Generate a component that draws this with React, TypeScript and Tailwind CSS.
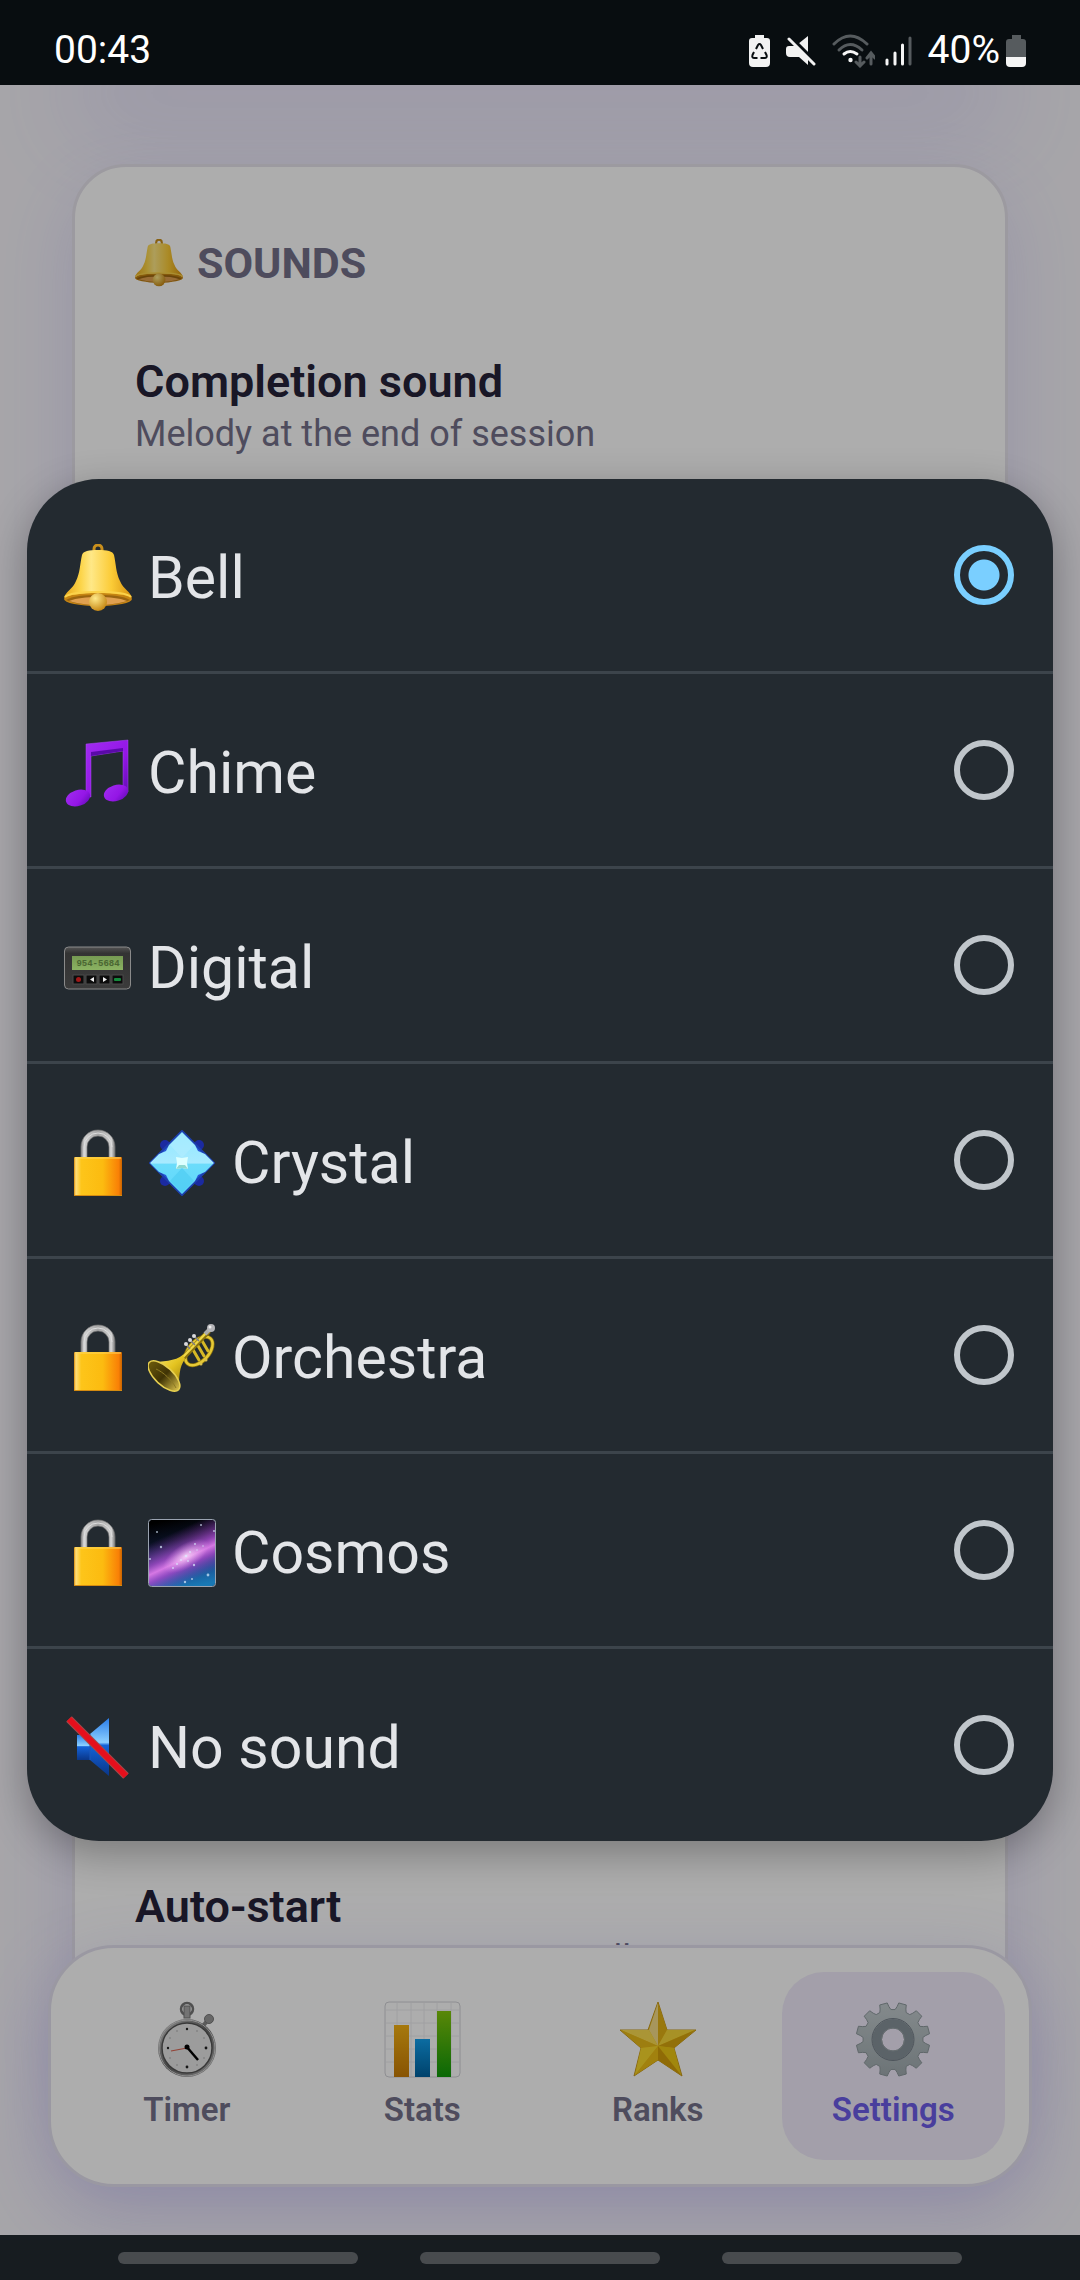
import { useState } from "react";
import type { ReactNode } from "react";

const Gradients: React.FC = () => (
  <svg width="0" height="0" className="absolute" aria-hidden="true">
    <defs>
      <linearGradient id="gold" x1="0" x2="1" y1="0" y2="0">
        <stop offset="0" stopColor="#e9a91c" />
        <stop offset="0.25" stopColor="#fcd54a" />
        <stop offset="0.4" stopColor="#ffe887" />
        <stop offset="0.7" stopColor="#fbcb36" />
        <stop offset="1" stopColor="#d8920f" />
      </linearGradient>
      <radialGradient id="clapper" cx="0.35" cy="0.3" r="0.8">
        <stop offset="0" stopColor="#ffe98a" />
        <stop offset="1" stopColor="#c07e08" />
      </radialGradient>
      <linearGradient id="purple" x1="0" x2="1" y1="0" y2="1">
        <stop offset="0" stopColor="#a02cf0" />
        <stop offset="0.6" stopColor="#9416e6" />
        <stop offset="1" stopColor="#5c0bb0" />
      </linearGradient>
      <linearGradient id="pager" x1="0" x2="0" y1="0" y2="1">
        <stop offset="0" stopColor="#555" />
        <stop offset="0.15" stopColor="#333" />
        <stop offset="1" stopColor="#3b3b3b" />
      </linearGradient>
      <linearGradient id="screen" x1="0" x2="0" y1="0" y2="1">
        <stop offset="0" stopColor="#769a52" />
        <stop offset="1" stopColor="#8bb262" />
      </linearGradient>
      <linearGradient id="lock" x1="0" x2="1" y1="0" y2="0">
        <stop offset="0" stopColor="#d98a0a" />
        <stop offset="0.04" stopColor="#ffdf7a" />
        <stop offset="0.15" stopColor="#fdc51a" />
        <stop offset="0.6" stopColor="#fcbb10" />
        <stop offset="0.93" stopColor="#f98006" />
        <stop offset="1" stopColor="#c96400" />
      </linearGradient>
      <linearGradient id="shackle" x1="0" x2="1" y1="0" y2="0">
        <stop offset="0" stopColor="#8c8c8c" />
        <stop offset="0.1" stopColor="#d0d0d0" />
        <stop offset="0.5" stopColor="#a5a5a5" />
        <stop offset="0.9" stopColor="#d0d0d0" />
        <stop offset="1" stopColor="#777" />
      </linearGradient>
      <linearGradient id="crystal" x1="0" x2="0" y1="0" y2="1">
        <stop offset="0" stopColor="#8fe8ff" />
        <stop offset="0.5" stopColor="#a8eaff" />
        <stop offset="0.52" stopColor="#6bdcfb" />
        <stop offset="1" stopColor="#5fd8fb" />
      </linearGradient>
      <linearGradient id="brass" x1="0" x2="1" y1="0" y2="1">
        <stop offset="0" stopColor="#fff07a" />
        <stop offset="0.5" stopColor="#e3c320" />
        <stop offset="1" stopColor="#8d7208" />
      </linearGradient>
      <linearGradient id="mouth" x1="0" x2="1" y1="0" y2="0">
        <stop offset="0" stopColor="#6c5a0c" />
        <stop offset="0.5" stopColor="#3f3305" />
        <stop offset="1" stopColor="#d8bf4a" />
      </linearGradient>
      <linearGradient id="sky" x1="0.4" x2="0.6" y1="0" y2="1">
        <stop offset="0" stopColor="#000" />
        <stop offset="0.3" stopColor="#0a1226" />
        <stop offset="0.75" stopColor="#1d4f92" />
        <stop offset="1" stopColor="#1878b4" />
      </linearGradient>
      <linearGradient id="band" x1="0" x2="0" y1="0" y2="1">
        <stop offset="0" stopColor="#8030a0" stopOpacity="0" />
        <stop offset="0.4" stopColor="#a848c8" stopOpacity="0.8" />
        <stop offset="0.55" stopColor="#d678e4" />
        <stop offset="0.7" stopColor="#a848cc" stopOpacity="0.8" />
        <stop offset="1" stopColor="#6c40b8" stopOpacity="0" />
      </linearGradient>
      <radialGradient id="core">
        <stop offset="0" stopColor="#ffe6fc" stopOpacity="0.8" />
        <stop offset="1" stopColor="#f0a8f0" stopOpacity="0" />
      </radialGradient>
      <clipPath id="frame">
        <rect x="1" y="1" width="66" height="66" rx="3" />
      </clipPath>
      <linearGradient id="speaker" x1="0" x2="0" y1="0" y2="1">
        <stop offset="0" stopColor="#2a7ce8" />
        <stop offset="0.42" stopColor="#8cd0ff" />
        <stop offset="0.47" stopColor="#1463d8" />
        <stop offset="1" stopColor="#0a3688" />
      </linearGradient>
      <linearGradient id="steel" x1="0" x2="1" y1="0" y2="1">
        <stop offset="0" stopColor="#d8d8d8" />
        <stop offset="0.5" stopColor="#666" />
        <stop offset="1" stopColor="#bbb" />
      </linearGradient>
      <linearGradient id="barOrange" x1="0" x2="0" y1="0" y2="1">
        <stop offset="0" stopColor="#f5b213" />
        <stop offset="1" stopColor="#c87c05" />
      </linearGradient>
      <linearGradient id="barBlue" x1="0" x2="0" y1="0" y2="1">
        <stop offset="0" stopColor="#12a0ee" />
        <stop offset="1" stopColor="#00629f" />
      </linearGradient>
      <linearGradient id="barGreen" x1="0" x2="0" y1="0" y2="1">
        <stop offset="0" stopColor="#84c80c" />
        <stop offset="1" stopColor="#0f9a0a" />
      </linearGradient>
      <linearGradient id="gear" x1="0" x2="0" y1="0" y2="1">
        <stop offset="0" stopColor="#c3cccf" />
        <stop offset="1" stopColor="#a0abaf" />
      </linearGradient>
    </defs>
  </svg>
);

const Glyph: React.FC<{ children: ReactNode; className?: string; box?: string }> = ({
  children,
  className = "size-[68px]",
  box = "0 0 68 68",
}) => (
  <svg viewBox={box} className={`shrink-0 ${className}`} aria-hidden="true">
    {children}
  </svg>
);

const BellIcon: React.FC<{ className?: string }> = ({ className }) => (
  <Glyph className={className}>
    <path d="M30 8V5a4 4 0 0 1 8 0v3" fill="none" stroke="#c98f1c" strokeWidth="3" />
    <ellipse cx="34" cy="55" rx="34" ry="7" fill="#c58412" />
    <path
      d="M34 6c-9 0-15 1-16 5-2 9-2 18-6 26C9 45 1 48 0 54c4-3 18-5 34-5s30 2 34 5c-1-6-9-9-12-17-4-8-4-17-6-26-1-4-7-5-16-5Z"
      fill="url(#gold)"
    />
    <path d="M2 56c6-4 18-5 32-5s26 1 32 5c-6 3-18 5-32 5S8 59 2 56Z" fill="#9a6410" />
    <path d="M5 57c8-3 17-4 29-4s21 1 29 4c-7 2-17 4-29 4S12 59 5 57Z" fill="#e0a050" />
    <path d="M1 53c4-4 17-5 33-5s29 1 33 5" fill="none" stroke="#fbd24a" strokeWidth="2" />
    <circle cx="34" cy="58" r="9" fill="url(#clapper)" />
  </Glyph>
);

const ChimeIcon = () => (
  <Glyph>
    <path
      d="M22 5 64 1v52h-5V12L27 17v41h-5Z"
      fill="url(#purple)"
      stroke="#a94cf2"
      strokeWidth="0.5"
    />
    <path d="m27 17 32-5v-3l-32 4Z" fill="#5a0aa8" />
    <ellipse cx="14" cy="59" rx="12.5" ry="8" fill="url(#purple)" transform="rotate(-18 14 59)" />
    <ellipse cx="52" cy="54" rx="12.5" ry="8" fill="url(#purple)" transform="rotate(-18 52 54)" />
  </Glyph>
);

const PagerIcon = () => (
  <Glyph>
    <rect x="0.5" y="13" width="66" height="42" rx="4" fill="url(#pager)" stroke="#8a8a8a" />
    <rect x="8" y="22" width="51" height="14" fill="url(#screen)" />
    <text
      x="34"
      y="32"
      textAnchor="middle"
      fill="#4a6632"
      className="font-['Liberation_Mono',monospace] text-[9px] font-bold"
    >
      954-5684
    </text>
    {[9, 22, 35, 48].map((x) => (
      <rect key={x} x={x} y="41" width="11" height="9" fill="#0c0c0c" stroke="#4a4a4a" />
    ))}
    <circle cx="14.500" cy="45.500" r="2.500" fill="#a01818" />
    <path d="m30 43-4 2.500 4 2.500Z" fill="#eee" />
    <path d="m39 43 4 2.500-4 2.500Z" fill="#eee" />
    <rect x="50" y="44" width="7" height="3" rx="1" fill="#148a3c" />
  </Glyph>
);

const LockIcon = () => (
  <Glyph>
    <path
      d="M17 29V18a17 17 0 0 1 34 0v11h-6V18a11 11 0 0 0-22 0v11Z"
      fill="url(#shackle)"
      stroke="#777"
      strokeWidth="0.7"
    />
    <path d="M20 28V18a14 14 0 0 1 28 0" fill="none" stroke="#dedede" strokeWidth="1" />
    <rect x="10" y="28" width="48" height="39" rx="1" fill="url(#lock)" />
    <path d="M11 29h46" stroke="#ffd65c" />
    <path d="M10 66.500h48" stroke="#d58b10" />
  </Glyph>
);

const CrystalIcon = () => (
  <Glyph>
    <g fill="#1b2aa0">
      <circle cx="17" cy="16" r="5" />
      <circle cx="51" cy="16" r="5" />
      <circle cx="17" cy="52" r="5" />
      <circle cx="51" cy="52" r="5" />
    </g>
    <path
      d="M34 2 66 34 34 66 2 34Z"
      fill="#2757d8"
      stroke="#1c3fae"
      strokeWidth="2"
      strokeLinejoin="round"
    />
    <path
      d="m34 3 13 13 3 6 7 3 9 9-9 9-7 3-3 6-13 13-13-13-3-6-7-3-9-9 9-9 7-3 3-6Z"
      fill="url(#crystal)"
    />
    <path d="m34 4 12 12-12 13-12-13Z" fill="#b5eeff" opacity="0.5" />
    <path d="m34 64 12-12-12-13-12 13Z" fill="#46c8ef" opacity="0.5" />
    <path d="m28 28 6 1 6-1-1 6 1 6-6-1-6 1 1-6Z" fill="#dff" />
    <path d="m28 40 6-1 6 1-3-4h-6Z" fill="#8fd8d0" />
  </Glyph>
);

const TrumpetIcon = () => (
  <Glyph>
    <g fill="none" stroke="#8a720c" strokeWidth="4">
      <ellipse cx="51" cy="27" rx="17" ry="10" transform="rotate(-48 51 27)" />
    </g>
    <g fill="none" stroke="#e6c936" strokeWidth="2.500">
      <ellipse cx="51" cy="27" rx="17" ry="10" transform="rotate(-48 51 27)" />
    </g>
    <g stroke="#d6b826" strokeWidth="3" strokeLinecap="round">
      <path d="m44 24 7 12" />
      <path d="m49 20 7 12" />
      <path d="m53 15 7 12" />
    </g>
    <path d="M32 37 61 7" stroke="#8a720c" strokeWidth="5" />
    <path d="M32 36 61 6" stroke="#f0d848" strokeWidth="2.500" />
    <path d="m57 10 6-6" stroke="#aaa" strokeWidth="4" />
    <circle cx="63" cy="4" r="4" fill="#b5b5b8" />
    <circle cx="62" cy="3" r="1.500" fill="#eee" />
    <g stroke="#7c7c82" strokeWidth="1.500">
      <path d="m38 20 4 5" />
      <path d="m42 16 5 5" />
      <path d="m46 12 5 5" />
    </g>
    <g fill="#d9d9dc">
      <circle cx="38" cy="20" r="2" />
      <circle cx="42" cy="16" r="2" />
      <circle cx="46" cy="12" r="2" />
    </g>
    <g fill="#d9c04a">
      <circle cx="53" cy="40" r="1.500" />
      <circle cx="58" cy="36" r="1.500" />
    </g>
    <path d="M1 38c14 0 26-1 34-7l2 4c-6 8-6 19-6 30Z" fill="url(#brass)" />
    <ellipse
      cx="16"
      cy="52"
      rx="20"
      ry="9"
      transform="rotate(43 16 52)"
      fill="url(#mouth)"
      stroke="#e6cf50"
      strokeWidth="1.500"
    />
    <path d="M8 45c7 3 16 11 20 19" stroke="#8d7a24" strokeWidth="1" fill="none" />
  </Glyph>
);

const stars = [
  [9, 13, 1], [53, 6, 1], [13, 28, 1.2], [47, 25, 1], [46, 46, 1.2], [60, 56, 1.4],
  [44, 60, 1], [37, 63, 1.2], [2, 40, 1], [38, 37, 1.3], [33, 41, 1], [42, 33, 1],
  [29, 45, 1], [49, 31, 0.8], [25, 49, 1], [40, 42, 0.9], [55, 27, 0.8], [66, 12, 1],
];

const CosmosIcon = () => (
  <Glyph>
    <g clipPath="url(#frame)">
      <rect width="68" height="68" fill="url(#sky)" />
      <rect x="-20" y="12" width="110" height="52" fill="url(#band)" transform="rotate(-25 34 38)" />
      <ellipse cx="38" cy="37" rx="26" ry="12" fill="url(#core)" transform="rotate(-32 38 37)" />
      {stars.map(([x, y, r]) => (
        <circle key={`${x}-${y}`} cx={x} cy={y} r={r} fill="#dcecff" opacity="0.7" />
      ))}
    </g>
    <rect x="0.500" y="0.500" width="67" height="67" rx="3" fill="none" stroke="#9aa3b0" />
  </Glyph>
);

const MutedIcon = () => (
  <Glyph>
    <path d="M13 21h13v25H13Z" fill="url(#speaker)" />
    <path d="M26 20 45 4v58L26 46Z" fill="url(#speaker)" />
    <path d="M26 20v26" stroke="#1c58b8" />
    <path d="m5 5 57 57" stroke="#a34a4a" strokeWidth="8" />
    <path d="m5 5 57 57" stroke="#e60f1c" strokeWidth="6" />
  </Glyph>
);

const NAV_BOX = "0 0 78 78";
const NAV_SIZE = "size-[78px]";

const TimerIcon = () => (
  <Glyph box={NAV_BOX} className={NAV_SIZE}>
    <circle cx="39" cy="9" r="6" fill="none" stroke="#777" strokeWidth="2.500" />
    <rect x="36" y="6" width="6" height="12" fill="#aaa" stroke="#777" />
    <path d="m54 27 6-7" stroke="#888" strokeWidth="4" />
    <circle cx="61" cy="19" r="4.500" fill="#999" stroke="#777" />
    <circle cx="39" cy="48" r="29" fill="url(#steel)" />
    <circle cx="39" cy="48" r="28" fill="none" stroke="#d5d5d5" strokeWidth="1" />
    <circle cx="39" cy="48" r="25" fill="#e6e6e6" stroke="#555" strokeWidth="1.500" />
    <g fill="#222">
      <circle cx="39" cy="29" r="1.200" />
      <circle cx="39" cy="67" r="1.400" />
      <circle cx="20" cy="48" r="1.200" />
      <circle cx="58" cy="48" r="1.400" />
    </g>
    <g fill="#aaa">
      <circle cx="29" cy="31" r="0.800" />
      <circle cx="49" cy="31" r="0.800" />
      <circle cx="22" cy="38" r="0.800" />
      <circle cx="56" cy="38" r="0.800" />
      <circle cx="22" cy="58" r="0.800" />
      <circle cx="56" cy="58" r="0.800" />
      <circle cx="29" cy="65" r="0.800" />
      <circle cx="49" cy="65" r="0.800" />
    </g>
    <path d="M39 48 23 51" stroke="#d8614f" strokeWidth="1.200" />
    <path d="m38 46 12 14" stroke="#000" strokeWidth="2.500" />
    <circle cx="39" cy="47" r="2.500" fill="#000" />
  </Glyph>
);

const StatsIcon = () => (
  <Glyph box={NAV_BOX} className={NAV_SIZE}>
    <rect x="2" y="2" width="75" height="75" rx="4" fill="#fff" stroke="#d2d2d8" />
    <path
      d="M14 3v73M28 3v73M41 3v73M54 3v73M68 3v73M3 10h73M3 23h73M3 36h73M3 49h73M3 62h73"
      stroke="#ececf0"
    />
    <rect x="11" y="25" width="15" height="52" fill="url(#barOrange)" />
    <rect x="32" y="39" width="15" height="38" fill="url(#barBlue)" />
    <rect x="54" y="11" width="14" height="66" fill="url(#barGreen)" />
  </Glyph>
);

const StarIcon = () => (
  <Glyph box={NAV_BOX} className={NAV_SIZE}>
    <path
      d="m39 2 9 28h29L55 48l8 28-24-16-24 16 7-28L1 30h28Z"
      fill="#f2c51a"
      stroke="#c79a1c"
      strokeLinejoin="round"
    />
    <path d="m39 3 9 27-9 16Z" fill="#e2b116" />
    <path d="m39 3-9 27 9 16Z" fill="#f6dd88" />
    <path d="M76 30H48l-9 16Z" fill="#f7d638" />
    <path d="M76 30 55 48l-16-2Z" fill="#d8a60e" />
    <path d="M2 30h28l9 16Z" fill="#fbdc50" />
    <path d="m2 30 20 18 17-2Z" fill="#e8ba18" />
    <path d="m62 75-7-27-16-2Z" fill="#edc814" />
    <path d="M62 75 39 60V46Z" fill="#d39e0a" />
    <path d="m16 75 6-27 17-2Z" fill="#fad92c" />
    <path d="m16 75 23-15V46Z" fill="#edbe16" />
  </Glyph>
);

// twelve teeth around a disc, point by point
const gearPath = Array.from({ length: 12 }, (_, i) => {
  const at = (deg: number, r: number) => {
    const a = ((i * 30 + deg) * Math.PI) / 180;
    return `${39 + r * Math.cos(a)} ${39.5 + r * Math.sin(a)}`;
  };
  return `${i ? "L" : "M"}${at(4, 30)}L${at(7, 33)}L${at(9, 37)}L${at(21, 37)}L${at(23, 33)}L${at(26, 30)}`;
}).join("");

const GearIcon = () => (
  <Glyph box={NAV_BOX} className={NAV_SIZE}>
    <path
      fillRule="evenodd"
      d={`${gearPath}ZM39 28a11.500 11.500 0 1 0 0 23a11.500 11.500 0 1 0 0-23Z`}
      fill="url(#gear)"
      stroke="#8e999d"
      strokeLinejoin="round"
    />
    <circle cx="39" cy="39.500" r="16" fill="none" stroke="#87929a" strokeWidth="9" />
    <circle cx="39" cy="39.500" r="21" fill="none" stroke="#727c86" />
    <circle cx="39" cy="39.500" r="11.500" fill="none" stroke="#98a2a6" />
  </Glyph>
);

const StatusBar: React.FC = () => (
  <header className="z-10 flex h-[85px] shrink-0 items-center justify-between bg-[#080d10] px-[54px] pt-4 text-[39px] leading-none text-white">
    <time>00:43</time>
    <div className="flex items-center gap-4">
      <svg viewBox="0 0 21 33" className="h-[33px] w-[21px]" aria-hidden="true">
        <path d="M6 1h9v3h3a3 3 0 0 1 3 3v22a4 4 0 0 1-4 4H4a4 4 0 0 1-4-4V7a3 3 0 0 1 3-3h3Z" fill="#f2f2f2" />
        <g fill="none" stroke="#080d10" strokeWidth="2">
          <path d="m7 15 2-4q1.500-2 3 0l2 4" />
          <path d="m5 18-1.500 3q-1 3 2 3h3" />
          <path d="m16 18 1.500 3q1 3-2 3h-4" />
        </g>
      </svg>
      <svg viewBox="0 0 30 30" className="size-[30px]" aria-hidden="true">
        <path d="M12 8 22 0v18ZM0 13q0-3 3-3h6l13 12v7l-9-8H4q-4 0-4-4Z" fill="#f2f2f2" />
        <path d="m5 1 25 25" stroke="#080d10" strokeWidth="3" />
        <path d="m3 3 25 25" stroke="#f2f2f2" strokeWidth="3" strokeLinecap="round" />
      </svg>
      <div className="flex items-center gap-2.5">
        <svg viewBox="0 0 43 34" className="h-[34px] w-[43px]" fill="none" strokeWidth="3" strokeLinecap="round" aria-hidden="true">
          <path d="M2 10q16-16 33 0" stroke="#565b5e" />
          <path d="M7 16q11-11 23 0" stroke="#565b5e" />
          <path d="M12 20q6-5 13 0" stroke="#f5f5f5" />
          <circle cx="18.500" cy="26" r="2.200" fill="#f5f5f5" />
          <path d="M28 23v9m-4-4 4 4 4-4M39 30V19m-4 5 4-5 4 5" stroke="#565b5e" />
        </svg>
        <svg viewBox="0 0 27 30" className="h-[30px] w-[27px]" strokeWidth="3" strokeLinecap="round" aria-hidden="true">
          <path d="M2 24v4M10 17v11M17.500 9v19" stroke="#f5f5f5" />
          <path d="M25 2v26" stroke="#565b5e" />
        </svg>
      </div>
      <div className="flex items-center gap-1.5">
        <span>40%</span>
        <svg viewBox="0 0 20 32" className="h-8 w-5" aria-hidden="true">
          <path d="M6 0h9v4h2a3 3 0 0 1 3 3v15H0V7a3 3 0 0 1 3-3h3Z" fill="#565b5e" />
          <path d="M0 22h20v6a4 4 0 0 1-4 4H4a4 4 0 0 1-4-4Z" fill="#f5f5f5" />
        </svg>
      </div>
    </div>
  </header>
);

const SettingRow: React.FC<{ title: string; hint: string }> = ({ title, hint }) => (
  <div>
    <h3 className="text-[45px] leading-[55px] font-semibold text-[#252238]">{title}</h3>
    <p className="text-4xl leading-[50px] text-[#74708a]">{hint}</p>
  </div>
);

const tabs = [
  { name: "Timer", Icon: TimerIcon },
  { name: "Stats", Icon: StatsIcon },
  { name: "Ranks", Icon: StarIcon },
  { name: "Settings", Icon: GearIcon },
];

const TabBar: React.FC = () => (
  <nav className="absolute inset-x-12 bottom-12 grid grid-cols-4 gap-3 rounded-[66px] border-[3px] border-[#e4e1ef] bg-white p-6 shadow-[0_24px_72px_rgba(108,92,231,0.25)]">
    {tabs.map(({ name, Icon }) => (
      <button
        key={name}
        type="button"
        className={`flex flex-col items-center gap-3 rounded-[42px] pt-7 pb-[30px] text-[33px] leading-10 font-semibold ${
          name === "Settings" ? "bg-[#f0ebfb] text-[#6c5ce7]" : "text-[#74708a]"
        }`}
      >
        <Icon />
        {name}
      </button>
    ))}
  </nav>
);

const sounds = [
  { name: "Bell", Icon: BellIcon },
  { name: "Chime", Icon: ChimeIcon },
  { name: "Digital", Icon: PagerIcon },
  { name: "Crystal", Icon: CrystalIcon, locked: true },
  { name: "Orchestra", Icon: TrumpetIcon, locked: true },
  { name: "Cosmos", Icon: CosmosIcon, locked: true },
  { name: "No sound", Icon: MutedIcon },
];

const SoundDialog: React.FC = () => {
  const [selected, setSelected] = useState("Bell");

  return (
    <div className="absolute inset-0 flex items-center bg-black/32 px-[27px]">
      <div
        role="radiogroup"
        aria-label="Completion sound"
        className="w-full divide-y-[3px] divide-[#3c444b] overflow-hidden rounded-[72px] bg-[#232a30] shadow-[0_12px_40px_rgba(0,0,0,0.3)]"
      >
        {sounds.map(({ name, Icon, locked }) => (
          <label
            key={name}
            className="box-content flex h-48 items-center justify-between pr-[39px] pl-[37px]"
          >
            <span className="flex items-center gap-4 pt-1.5 text-[59px] leading-[70px] text-[#e3e5e8]">
              {locked && <LockIcon />}
              <Icon />
              {name}
            </span>
            <input
              type="radio"
              name="sound"
              checked={selected === name}
              onChange={() => setSelected(name)}
              className="size-[60px] appearance-none rounded-full border-[6px] border-[#c0c6cb] checked:border-[#7acfff] checked:bg-[radial-gradient(circle,#7acfff_15px,transparent_16px)]"
            />
          </label>
        ))}
      </div>
    </div>
  );
};

const App: React.FC = () => {
  return (
    <div className="flex h-screen flex-col overflow-hidden bg-[#f6f4fa] font-[Roboto,sans-serif]">
      <Gradients />
      <StatusBar />
      <main className="relative flex flex-1 flex-col">
        <div className="mx-[72px] -mt-20 h-20 shadow-[0_48px_96px_rgba(108,92,231,0.14)]" />
        <section className="mx-[72px] mt-[79px] mb-[120px] flex flex-1 flex-col justify-between rounded-[54px] border-[3px] border-[#e6e3ec] bg-white px-[60px] pt-[72px] pb-32 shadow-[0_24px_72px_rgba(108,92,231,0.16)]">
          <div>
            <h2 className="mb-[67px] flex items-center gap-3.5 text-[43px] leading-[48px] font-bold text-[#74708a]">
              <BellIcon className="size-12" />
              SOUNDS
            </h2>
            <SettingRow title="Completion sound" hint="Melody at the end of session" />
          </div>
          <SettingRow title="Auto-start" hint="Start next session automatically" />
        </section>
        <TabBar />
        <SoundDialog />
      </main>
      <footer className="z-10 flex h-[45px] shrink-0 items-center justify-center gap-[62px] bg-[#171c20]">
        <button type="button" aria-label="Recent apps" className="h-3 w-60 rounded-full bg-[#484b4e]" />
        <button type="button" aria-label="Home" className="h-3 w-60 rounded-full bg-[#484b4e]" />
        <button type="button" aria-label="Back" className="h-3 w-60 rounded-full bg-[#484b4e]" />
      </footer>
    </div>
  );
};

export default App;
